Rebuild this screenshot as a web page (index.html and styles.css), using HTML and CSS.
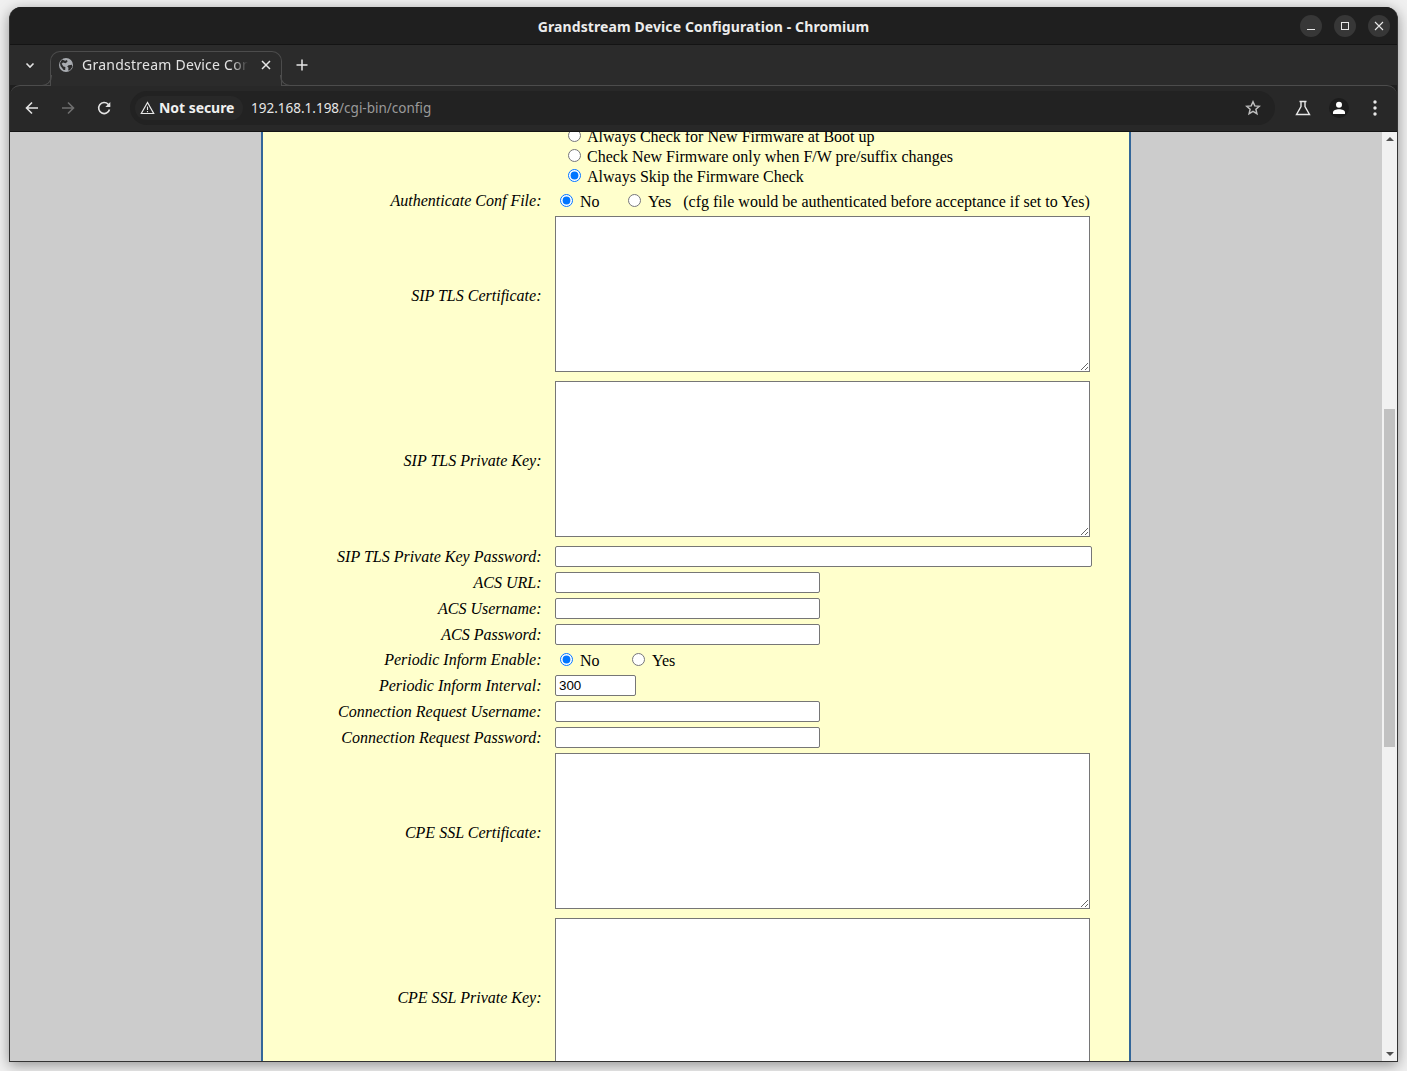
FILE: index.html
```html
<!DOCTYPE html>
<html lang="en">
<head>
  <meta charset="UTF-8">
  <title>Grandstream Device Configuration - Chromium</title>
  <link rel="stylesheet" href="styles.css">
</head>
<body>
  <div class="window">
    <header class="titlebar">
      <div class="title">Grandstream Device Configuration - Chromium</div>
      <div class="win-controls">
        <span class="win-btn"><svg width="10" height="10" viewBox="0 0 10 10"><path d="M1 8.500h8" stroke="#e8e8e8" stroke-width="1"/></svg></span>
        <span class="win-btn"><svg width="10" height="10" viewBox="0 0 10 10"><rect x="1.500" y="1.500" width="7" height="7" fill="none" stroke="#e8e8e8" stroke-width="1"/></svg></span>
        <span class="win-btn"><svg width="10" height="10" viewBox="0 0 10 10"><path d="M1 1l8 8M9 1l-8 8" stroke="#e8e8e8" stroke-width="1.100"/></svg></span>
      </div>
    </header>

    <div class="tabstrip">
      <span class="tab-search"><svg width="12" height="12" viewBox="0 0 12 12"><path d="M2.500 4.500L6 8l3.500-3.500" fill="none" stroke="#e3e3e3" stroke-width="1.600"/></svg></span>
      <div class="tab">
        <svg class="favicon" width="14" height="14" viewBox="0 0 14 14"><circle cx="7" cy="7" r="7" fill="#a8abb0"/><path d="M3 1.500l3.200 1.200L8 2l.5 1.800-2 1.500L4 4.600 2.600 5.800l1.800 2.600 2 .5-.2 3.200L4.600 12 1.500 8 1 5zM9.500 7.200l3.300-.5.600 2L11 12.200l-1.800.2.300-2.600-1.300-1.300z" fill="#2b2b2b"/></svg>
        <span class="tab-title">Grandstream Device Configuration</span>
        <svg class="tab-close" width="10" height="10" viewBox="0 0 10 10"><path d="M1 1l8 8M9 1l-8 8" stroke="#e6e6e6" stroke-width="1.500"/></svg>
      </div>
      <svg class="new-tab" width="12" height="12" viewBox="0 0 12 12"><path d="M6 .5v11M.5 6h11" stroke="#e6e6e6" stroke-width="1.500"/></svg>
    </div>

    <div class="toolbar">
      <span class="nav-btn"><svg width="16" height="16" viewBox="0 0 16 16"><path d="M14 8H3M8 2.500L2.500 8 8 13.500" fill="none" stroke="#e3e3e3" stroke-width="1.600"/></svg></span>
      <span class="nav-btn"><svg width="16" height="16" viewBox="0 0 16 16"><path d="M2 8h11M8 2.500L13.500 8 8 13.500" fill="none" stroke="#6f6f6f" stroke-width="1.600"/></svg></span>
      <span class="nav-btn"><svg width="16" height="16" viewBox="0 0 16 16"><path d="M13.500 9.500A5.500 5.500 0 1 1 12.200 4.300L13.700 5.800" fill="none" stroke="#e3e3e3" stroke-width="1.600"/><path d="M14.300 2v5h-5z" fill="#e3e3e3"/></svg></span>
      <div class="omnibox">
        <div class="security-chip">
          <svg width="15" height="14" viewBox="0 0 15 14"><path d="M7.500 1.500L1.300 12.500h12.400z" fill="none" stroke="#e8e8e8" stroke-width="1.200"/><path d="M7.500 5.500v3.600M7.500 10v1.200" stroke="#e8e8e8" stroke-width="1.100"/></svg>
          <span>Not secure</span>
        </div>
        <div class="url"><span class="url-host">192.168.1.198</span>/cgi-bin/config</div>
        <svg class="star" width="16" height="16" viewBox="0 0 16 16"><path d="M8 1.800l1.800 4.100 4.500.4-3.400 3 1 4.400L8 11.400l-3.900 2.300 1-4.400-3.400-3 4.500-.4z" fill="none" stroke="#bdbdbd" stroke-width="1.500"/></svg>
      </div>
      <span class="tool-btn flask"><svg width="16" height="16" viewBox="0 0 16 16"><path d="M4.500 1.500h7M6 1.500v5L1.500 14.500h13L10 6.500v-5" fill="none" stroke="#e8e8e8" stroke-width="1.400"/></svg></span>
      <span class="tool-btn avatar"><svg width="14" height="14" viewBox="0 0 14 14"><circle cx="7" cy="3.800" r="3" fill="#fff"/><path d="M1 13v-1.500C1 9.500 4 8.300 7 8.300s6 1.200 6 3.200V13z" fill="#fff"/></svg></span>
      <span class="tool-btn"><svg width="4" height="16" viewBox="0 0 4 16"><circle cx="2" cy="2" r="1.700" fill="#e8e8e8"/><circle cx="2" cy="8" r="1.700" fill="#e8e8e8"/><circle cx="2" cy="14" r="1.700" fill="#e8e8e8"/></svg></span>
    </div>

    <div class="viewport">
      <div class="gutter"></div>
      <main class="panel">
        <div class="content">
          <div class="row row-firmware">
            <div class="label"></div>
            <div class="options">
              <div class="option"><input type="radio" name="fw">Always Check for New Firmware at Boot up</div>
              <div class="option"><input type="radio" name="fw">Check New Firmware only when F/W pre/suffix changes</div>
              <div class="option"><input type="radio" name="fw" checked>Always Skip the Firmware Check</div>
            </div>
          </div>

          <div class="row row-radio">
            <div class="label">Authenticate Conf File:</div>
            <div class="radios">
              <label class="radio-no"><input type="radio" name="auth" checked>No</label>
              <label class="radio-yes"><input type="radio" name="auth">Yes</label>
              <span class="note">(cfg file would be authenticated before acceptance if set to Yes)</span>
            </div>
          </div>

          <div class="row row-area">
            <div class="label">SIP TLS Certificate:</div>
            <textarea></textarea>
          </div>
          <div class="row row-area">
            <div class="label">SIP TLS Private Key:</div>
            <textarea></textarea>
          </div>

          <div class="row">
            <div class="label">SIP TLS Private Key Password:</div>
            <input class="field field-wide" type="text">
          </div>
          <div class="row">
            <div class="label">ACS URL:</div>
            <input class="field" type="text">
          </div>
          <div class="row">
            <div class="label">ACS Username:</div>
            <input class="field" type="text">
          </div>
          <div class="row">
            <div class="label">ACS Password:</div>
            <input class="field" type="password">
          </div>

          <div class="row row-radio">
            <div class="label">Periodic Inform Enable:</div>
            <div class="radios">
              <label class="radio-no radio-no-long"><input type="radio" name="inform" checked>No</label>
              <label class="radio-yes"><input type="radio" name="inform">Yes</label>
            </div>
          </div>

          <div class="row">
            <div class="label">Periodic Inform Interval:</div>
            <input class="field field-short" type="text" value="300">
          </div>
          <div class="row">
            <div class="label">Connection Request Username:</div>
            <input class="field" type="text">
          </div>
          <div class="row">
            <div class="label">Connection Request Password:</div>
            <input class="field" type="password">
          </div>

          <div class="row row-area">
            <div class="label">CPE SSL Certificate:</div>
            <textarea></textarea>
          </div>
          <div class="row row-area">
            <div class="label">CPE SSL Private Key:</div>
            <textarea></textarea>
          </div>
        </div>
      </main>
      <div class="gutter"></div>
      <div class="scrollbar">
        <span class="arrow arrow-up"></span>
        <span class="thumb"></span>
        <span class="arrow arrow-down"></span>
      </div>
    </div>
  </div>
</body>
</html>
```

FILE: styles.css
```css
* {
  box-sizing: border-box;
}

html,
body {
  height: 100%;
}

body {
  margin: 0;
  background: #f0f0f0;
  overflow: hidden;
  font-family: "Noto Sans", sans-serif;
}

.window {
  display: flex;
  flex-direction: column;
  width: 1389px;
  height: 1055px;
  margin: 7px 0 0 9px;
  border: 1px solid #333;
  border-top: 0;
  border-radius: 12px 12px 0 0;
  background: #1f1f1f;
  box-shadow: 0 3px 14px rgba(0, 0, 0, 0.4);
  overflow: hidden;
}

/* title bar */
.titlebar {
  position: relative;
  flex: none;
  height: 38px;
  padding-top: 2px;
  display: flex;
  align-items: center;
  justify-content: center;
  background: #1f1f1f;
  border-bottom: 1px solid #141414;
}

.title {
  color: #ececec;
  font-size: 14px;
  font-weight: 700;
  letter-spacing: 0.1px;
}

.win-controls {
  position: absolute;
  right: 7px;
  top: 8px;
  display: flex;
  gap: 12px;
}

.win-btn {
  width: 22px;
  height: 22px;
  border-radius: 50%;
  background: #373737;
  display: flex;
  align-items: center;
  justify-content: center;
}

/* tabs */
.tabstrip {
  flex: none;
  height: 40px;
  background: #2b2b2b;
  display: flex;
  align-items: flex-end;
  position: relative;
  z-index: 1;
}

.tab-search {
  width: 40px;
  height: 40px;
  display: flex;
  align-items: center;
  justify-content: center;
}

.tab {
  position: relative;
  width: 232px;
  height: 35px;
  margin-bottom: -1px;
  padding: 0 10px 8px 8px;
  display: flex;
  align-items: center;
  background: #2b2b2b;
  border: 1px solid #4c4c4c;
  border-bottom: 0;
  border-radius: 10px 10px 0 0;
}

.tab::before,
.tab::after {
  content: "";
  position: absolute;
  bottom: 0;
  width: 10px;
  height: 10px;
  border-bottom: 1px solid #4c4c4c;
}

.tab::before {
  left: -10px;
  border-right: 1px solid #4c4c4c;
  border-bottom-right-radius: 10px;
}

.tab::after {
  right: -10px;
  border-left: 1px solid #4c4c4c;
  border-bottom-left-radius: 10px;
}

.favicon {
  flex: none;
}

.tab-title {
  flex: 1;
  margin: -2px 0 0 9px;
  color: #e3e3e3;
  font-size: 14px;
  letter-spacing: 0.25px;
  white-space: nowrap;
  overflow: hidden;
  -webkit-mask-image: linear-gradient(to right, #000 150px, transparent 166px);
  mask-image: linear-gradient(to right, #000 150px, transparent 166px);
}

.tab-close {
  flex: none;
  margin-left: 13px;
}

.new-tab {
  margin: 0 0 14px 14px;
}

/* toolbar */
.toolbar {
  flex: none;
  height: 47px;
  padding: 0 4px 1px 4px;
  display: flex;
  align-items: center;
  background: #282828;
  border-top: 1px solid #4c4c4c;
  border-bottom: 1px solid #141414;
  border-radius: 10px 10px 0 0;
}

.nav-btn {
  flex: none;
  width: 36px;
  height: 36px;
  display: flex;
  align-items: center;
  justify-content: center;
}

.omnibox {
  flex: none;
  width: 1145px;
  height: 34px;
  margin-left: 8px;
  padding: 0 14px 0 5px;
  display: flex;
  align-items: center;
  background: #222;
  border-radius: 17px;
}

.security-chip {
  height: 24px;
  width: 108px;
  padding: 0 0 2px 4.5px;
  display: flex;
  align-items: center;
  gap: 4.5px;
  background: #282828;
  border-radius: 12px;
  color: #f0f0f0;
  font-size: 14px;
  font-weight: 700;
  letter-spacing: -0.05px;
  white-space: nowrap;
}

.security-chip svg {
  margin-top: 2px;
}

.url {
  margin-left: 8px;
  flex: 1;
  color: #9a9a9a;
  font-size: 13.5px;
}

.url-host {
  color: #e6e6e6;
}

.tool-btn {
  flex: none;
  width: 36px;
  height: 36px;
  display: flex;
  align-items: center;
  justify-content: center;
}

.flask {
  margin-left: 10px;
}

.avatar {
  position: relative;
}

.avatar::before {
  content: "";
  position: absolute;
  left: 8px;
  top: 8px;
  width: 20px;
  height: 20px;
  border-radius: 50%;
  background: #1c1c1c;
}

.avatar svg {
  position: relative;
}

/* page */
.viewport {
  flex: 1;
  min-height: 0;
  display: flex;
  background: #ccc;
  overflow: hidden;
}

.gutter {
  flex: none;
  width: 251px;
  background: #ccc;
}

.panel {
  flex: none;
  width: 870px;
  background: #ffc;
  border-left: 2px solid #336699;
  border-right: 2px solid #336699;
  overflow: hidden;
}

.content {
  margin-top: -11px;
  font-family: "Liberation Serif", serif;
  font-size: 16px;
  color: #000;
}

.row {
  display: flex;
  align-items: center;
  gap: 13.5px;
  margin-top: 5px;
}

.row-firmware {
  padding-top: 1px;
}

.row-firmware + .row {
  margin-top: 4px;
}

.label {
  flex: none;
  width: 278.5px;
  text-align: right;
  font-style: italic;
  line-height: 20px;
}

.row-area {
  align-items: flex-start;
  height: 160px;
}

.row-area .label {
  align-self: center;
}

textarea {
  display: block;
  width: 535px;
  height: 156px;
  margin: 0;
  background: #fff;
}

.field {
  display: block;
  width: 265px;
  height: 21px;
  margin: 0;
  padding: 1px 3px;
  font-family: "Liberation Sans", sans-serif;
  font-size: 13.33px;
  background: #fff;
  border: 1px solid #767676;
  border-radius: 2px;
}

.field-wide {
  width: 537px;
}

.field-short {
  width: 81px;
}

.options {
  margin-left: 9px;
}

.option {
  height: 20px;
  line-height: 20px;
  display: flex;
  align-items: center;
  white-space: nowrap;
}

.option input {
  margin: 0 6px 3px 4px;
}

.radios {
  display: flex;
  align-items: center;
  height: 20px;
  line-height: 20px;
  margin: 1px 0 -1px 1px;
  white-space: nowrap;
}

.radios label {
  display: flex;
  align-items: center;
}

.radios input {
  margin: 0 7px 3px 4px;
}

.radio-no {
  width: 68px;
}

.radio-no-long {
  width: 72px;
}

.note {
  margin-left: 12px;
}

/* fake scrollbar, the page is shown part way down */
.scrollbar {
  flex: none;
  width: 15px;
  display: flex;
  flex-direction: column;
  align-items: center;
  background: #f1f1f1;
}

.arrow {
  flex: none;
  width: 0;
  height: 0;
  border-left: 4px solid transparent;
  border-right: 4px solid transparent;
}

.arrow-up {
  margin-top: 5px;
  border-bottom: 4px solid #505050;
}

.arrow-down {
  margin-top: auto;
  margin-bottom: 5px;
  border-top: 4px solid #505050;
}

.thumb {
  flex: none;
  width: 11px;
  height: 338px;
  margin-top: 268px;
  background: #c1c1c1;
}
```
